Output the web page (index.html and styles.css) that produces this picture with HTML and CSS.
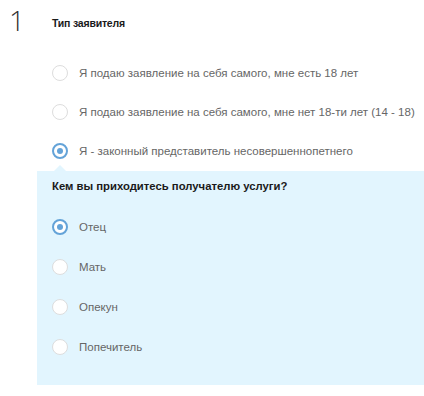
FILE: index.html
```html
<!DOCTYPE html>
<html lang="ru">
    <head>
        <meta charset="UTF-8">
        <meta name="viewport" content="width=device-width, initial-scale=1.0">
        <title>Тип заявителя</title>
        <link rel="stylesheet" href="styles.css">
    </head>
    <body>
        <section class="step">
            <div class="step-num">1</div>
            <div class="step-body">
                <h2 class="step-title">Тип заявителя</h2>
                <div class="options">
                    <label class="option"><span class="radio"></span>Я подаю заявление на себя самого, мне есть 18 лет</label>
                    <label class="option"><span class="radio"></span>Я подаю заявление на себя самого, мне нет 18-ти лет (14 - 18)</label>
                    <label class="option"><span class="radio radio-checked"></span>Я - законный представитель несовершеннопетнего</label>
                </div>
                <div class="sub-panel">
                    <h3 class="sub-title">Кем вы приходитесь получателю услуги?</h3>
                    <div class="options sub-options">
                        <label class="option"><span class="radio radio-checked"></span>Отец</label>
                        <label class="option"><span class="radio"></span>Мать</label>
                        <label class="option"><span class="radio"></span>Опекун</label>
                        <label class="option"><span class="radio"></span>Попечитель</label>
                    </div>
                </div>
            </div>
        </section>
    </body>
</html>
```
FILE: styles.css
```css
body
{
    margin: 0;
    background-color: #ffffff;
    font-family: "Liberation Sans", Arial, sans-serif;
}
.step
{
    display: flex;
}
.step-num
{
    width: 37px;
    flex: none;
    padding: 5px 0 0 9px;
    box-sizing: border-box;
    font-family: "Open Sans", sans-serif;
    font-weight: 300;
    font-size: 28px;
    line-height: 30px;
    color: #333333;
}
.step-body
{
    flex: 1;
    min-width: 0;
}
.step-title
{
    margin: 0;
    padding: 16px 15px 0;
    font-size: 10.5px;
    line-height: 14px;
    letter-spacing: -0.2px;
    font-weight: bold;
    color: #1a1a1a;
}
.options
{
    display: flex;
    flex-direction: column;
    padding: 23px 15px 0;
}
.option
{
    display: flex;
    align-items: center;
    gap: 11px;
    height: 39px;
    font-size: 11.5px;
    color: #666666;
    white-space: nowrap;
}
.radio
{
    width: 16px;
    height: 16px;
    border: 1px solid #dddddd;
    border-radius: 50%;
    background-color: #ffffff;
    box-sizing: border-box;
    display: flex;
    align-items: center;
    justify-content: center;
    flex: none;
}
.radio-checked
{
    border: 2px solid #64a3d8;
}
.radio-checked::after
{
    content: "";
    width: 6px;
    height: 6px;
    border-radius: 50%;
    background-color: #64a3d8;
}
.sub-panel
{
    position: relative;
    margin-top: 1px;
    padding: 8px 15px 18px;
    background-color: #e2f5fe;
}
.sub-panel::before
{
    content: "";
    position: absolute;
    top: -6px;
    left: 17px;
    border-left: 6px solid transparent;
    border-right: 6px solid transparent;
    border-bottom: 6px solid #e2f5fe;
}
.sub-title
{
    margin: 0;
    font-size: 11.3px;
    line-height: 14px;
    font-weight: bold;
    color: #1a1a1a;
}
.sub-options
{
    padding: 14px 0 0;
}
.sub-options .option
{
    height: 40px;
}
```
